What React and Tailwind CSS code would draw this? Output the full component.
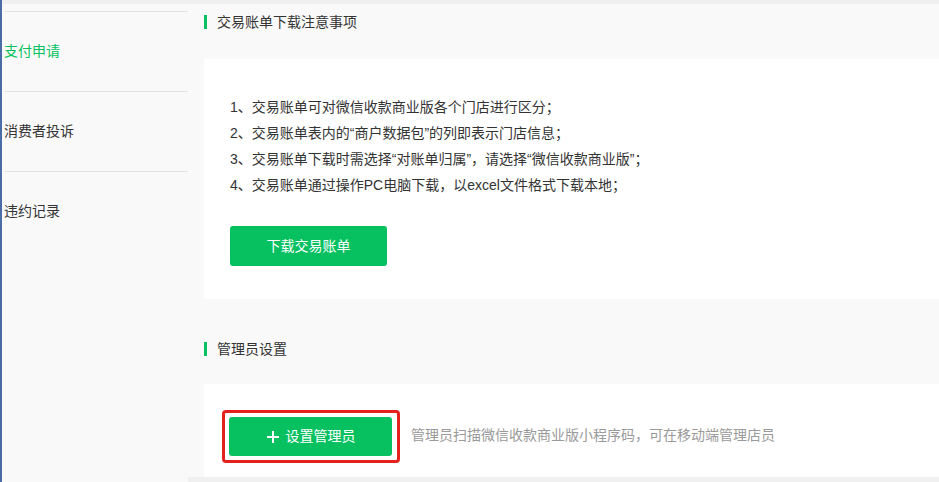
import React from "react";

const menu = [
  { label: "支付申请", active: true },
  { label: "消费者投诉" },
  { label: "违约记录" },
];

const notes = [
  "1、交易账单可对微信收款商业版各个门店进行区分；",
  "2、交易账单表内的“商户数据包”的列即表示门店信息；",
  "3、交易账单下载时需选择“对账单归属”，请选择“微信收款商业版”；",
  "4、交易账单通过操作PC电脑下载，以excel文件格式下载本地；",
];

const SectionTitle = ({ children, className = "" }) => (
  <div className={`flex items-center h-[20px] ${className}`}>
    <span className="w-[3px] h-[14px] bg-[#07c160]" />
    <span className="ml-[10px] text-[14px] text-[#333]">{children}</span>
  </div>
);

const App = () => {
  return (
    <div
      className="w-[939px] h-[482px] overflow-hidden bg-[#f9f9f9] border-l-2 border-[#4a6da7] flex flex-col"
      style={{ fontFamily: '"Liberation Sans", "Noto Sans CJK SC", sans-serif' }}
    >
      <div className="h-[4px] bg-[#f0f0f0] shrink-0" />
      <div className="flex flex-1 min-h-0">
        {/* Sidebar */}
        <div className="w-[186px] shrink-0 pt-[7px] pl-[2px]">
          {menu.map((m) => (
            <div
              key={m.label}
              className="h-[80px] border-t border-[#e3e3e3] flex items-center"
            >
              <span className={`text-[14px] ${m.active ? "text-[#07c160]" : "text-[#333]"}`}>
                {m.label}
              </span>
            </div>
          ))}
        </div>

        {/* Main */}
        <div className="flex-1 ml-[16px] flex flex-col">
          <SectionTitle className="mt-[8px] mb-[27px]">交易账单下载注意事项</SectionTitle>

          <div className="bg-white pl-[26px] pt-[35px] pb-[33px]">
            <ul className="text-[14px] text-[#333] leading-[26px]">
              {notes.map((n) => (
                <li key={n}>{n}</li>
              ))}
            </ul>
            <button className="mt-[28px] w-[157px] h-[40px] rounded-[3px] bg-[#07c160] text-white text-[14px]">
              下载交易账单
            </button>
          </div>

          <SectionTitle className="mt-[40px] mb-[25px]">管理员设置</SectionTitle>

          <div className="bg-white pl-[25px] pt-[33px] flex-1 flex items-start">
            <div className="relative">
              <button className="w-[163px] h-[39px] rounded-[3px] bg-[#07c160] text-white text-[14px] flex items-center justify-center gap-[6px]">
                <svg width="14" height="14" viewBox="0 0 14 14" fill="none">
                  <path d="M7 1v12M1 7h12" stroke="white" strokeWidth="2" />
                </svg>
                设置管理员
              </button>
              <div className="absolute -left-[7px] -top-[7px] -right-[8px] -bottom-[7px] border-[3px] border-[#e5211d] rounded-[4px] pointer-events-none" />
            </div>
            <span className="ml-[19px] mt-[8px] text-[14px] text-[#9a9a9a]">
              管理员扫描微信收款商业版小程序码，可在移动端管理店员
            </span>
          </div>
          <div className="h-[5px] bg-[#f0f0f0] shrink-0 -ml-[16px]" />
        </div>
      </div>
    </div>
  );
};

export default App;
